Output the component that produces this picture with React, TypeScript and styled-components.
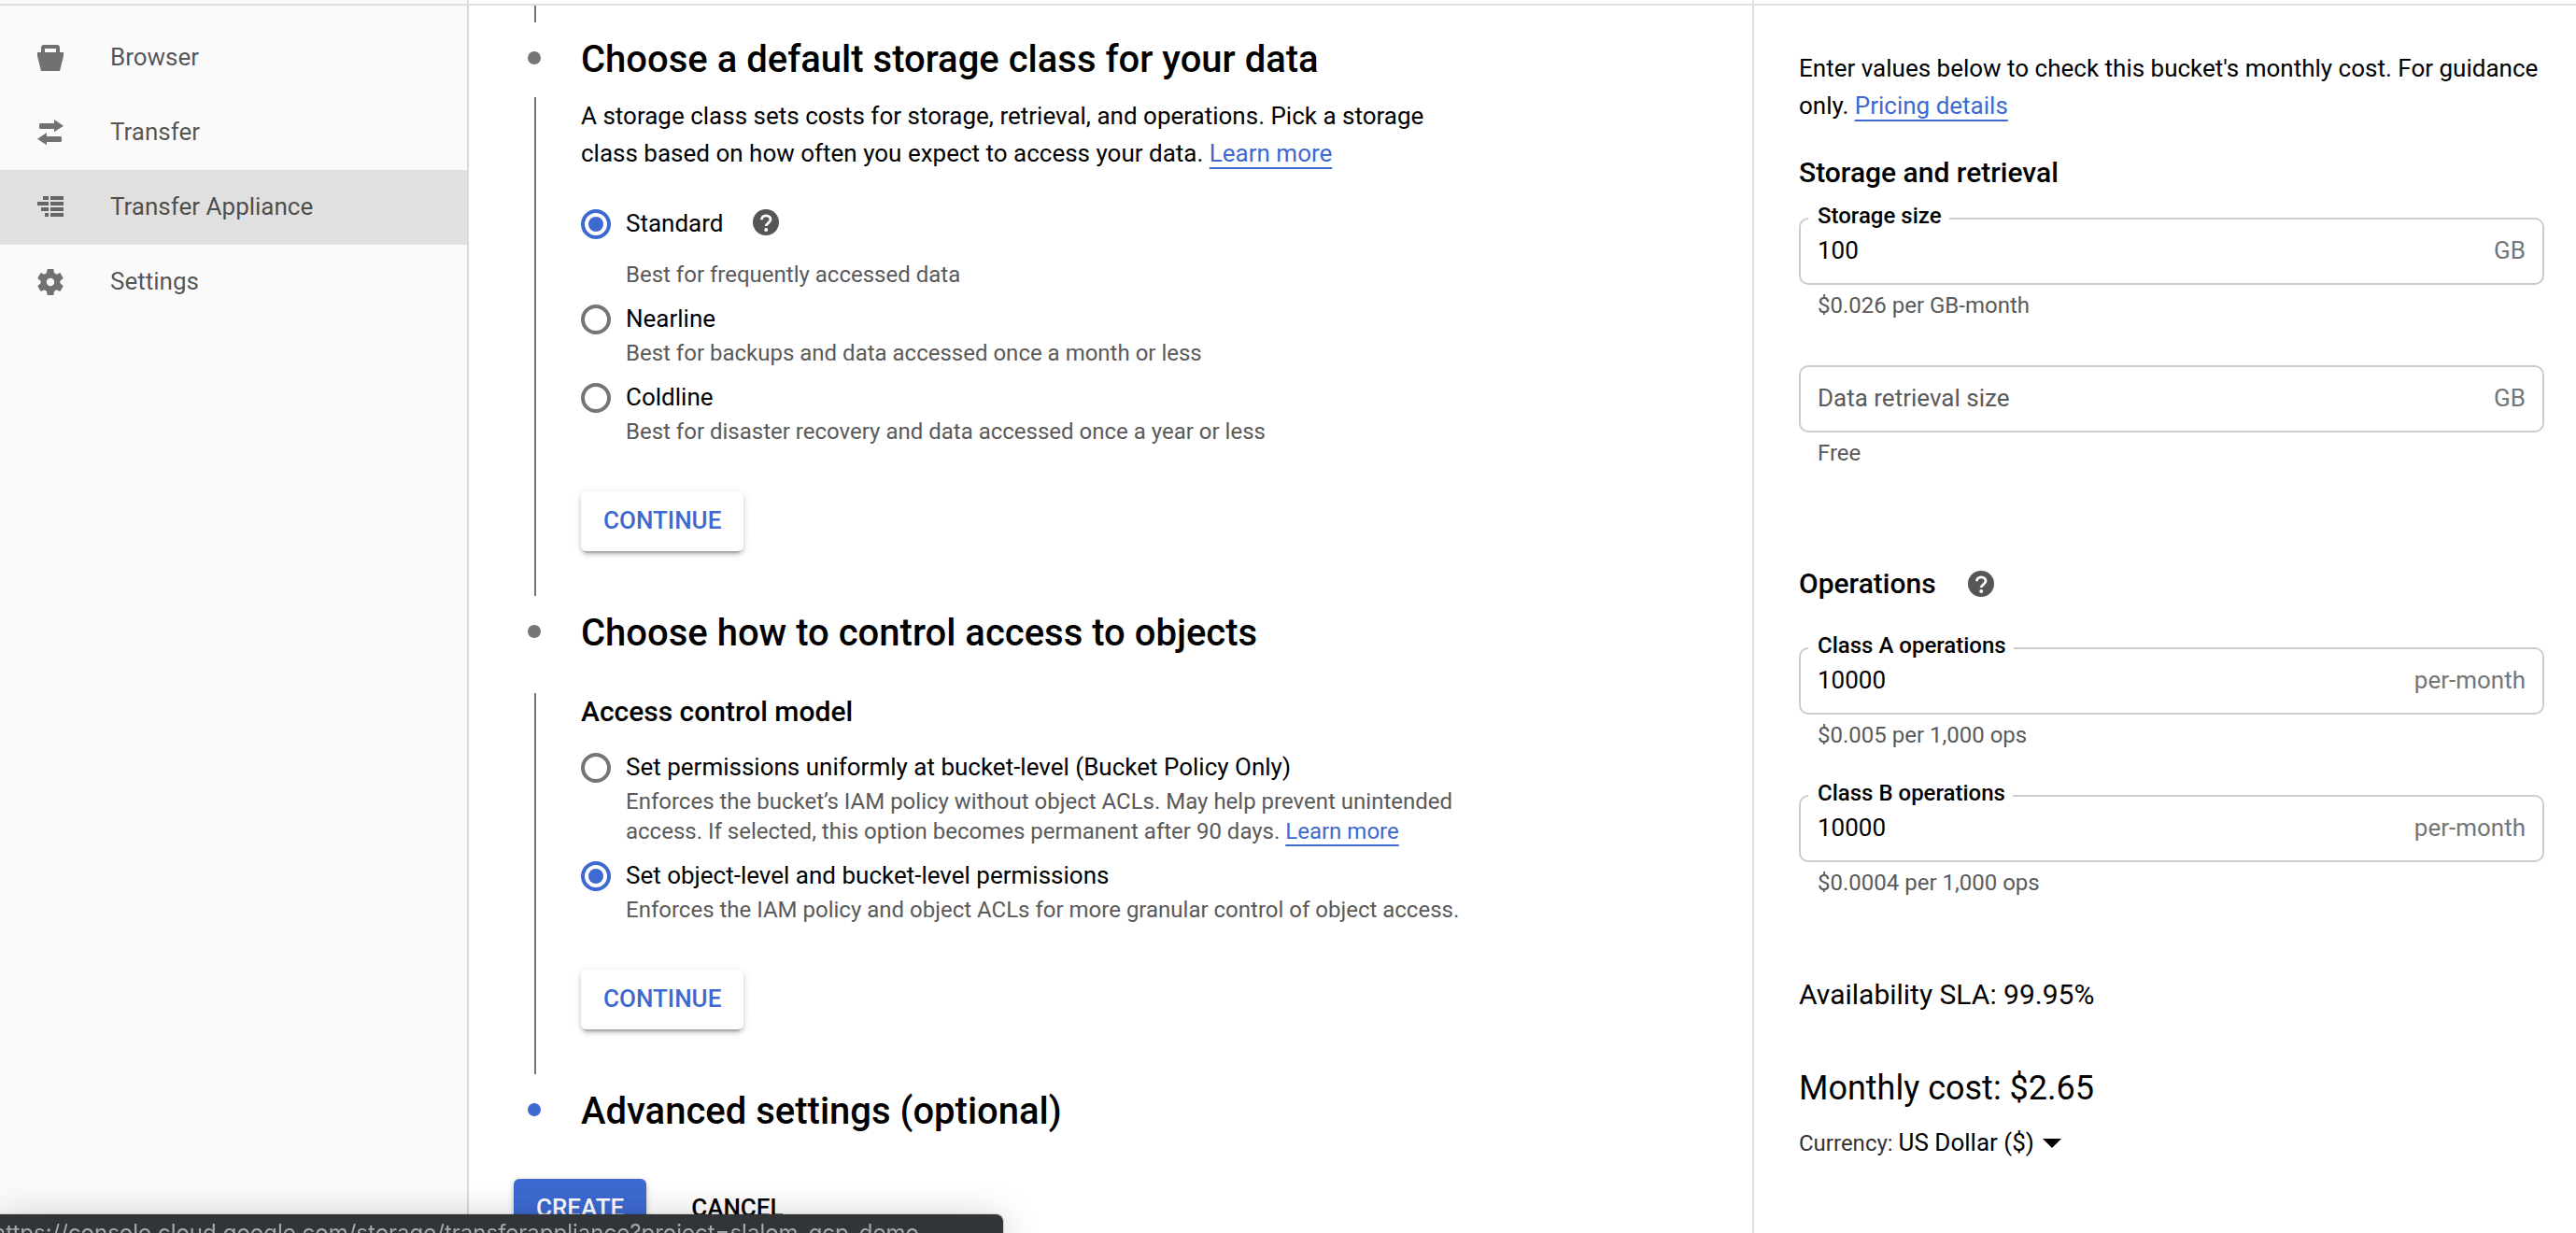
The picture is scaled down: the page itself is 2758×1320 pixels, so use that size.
import React, { ReactNode, useId, useState } from "react";
import styled, { createGlobalStyle, css } from "styled-components";

const color = {
  line: "#e0e0e0",
  outline: "#cccccc",
  link: "#3d69d0",
  muted: "#5a5a5a",
  suffix: "#757575",
  control: "#757575",
  sidebar: "#fafafa",
};

const GlobalStyle = createGlobalStyle`
  *, *::before, *::after { box-sizing: border-box; }
  body { margin: 0; background: #fff; color: #000; }
  body, button, input, select {
    font-family: Roboto, "Liberation Sans", sans-serif;
    font-size: 26px;
  }
  h2, h3, p { margin: 0; }
`;

const Shell = styled.div`
  display: grid;
  grid-template-columns: 502px minmax(0, 1fr) 882px;
  height: 100vh;
  overflow: hidden;
  line-height: 40px;
`;

const TopEdge = styled.div`
  flex: none;
  height: 6px;
  border-bottom: 2px solid ${color.line};
`;

/* Sidebar */

const Sidebar = styled.aside`
  display: flex;
  flex-direction: column;
  background: ${color.sidebar};
  border-right: 2px solid #dadada;
`;

const NavList = styled.nav`
  display: flex;
  flex-direction: column;
  padding-top: 16px;
`;

const NavLink = styled.a<{ $active?: boolean }>`
  display: flex;
  align-items: center;
  gap: 50px;
  height: 80px;
  padding-left: 40px;
  color: rgba(0, 0, 0, 0.68);
  text-decoration: none;
  background: ${(p) => (p.$active ? "#e0e0e0" : "transparent")};

  svg {
    flex: none;
    fill: rgba(0, 0, 0, 0.55);
  }
`;

const NavText = styled.span`
  padding-bottom: 2px;
`;

const CollapseButton = styled.button`
  display: flex;
  align-items: center;
  height: 60px;
  margin-top: auto;
  padding: 0 43px;
  border: 0;
  background: none;
`;

/* Steps */

const Main = styled.main`
  display: flex;
  flex-direction: column;
  min-width: 0;
`;

const Steps = styled.div`
  padding-left: 63px;
`;

const StepRow = styled.div<{ $roomy?: boolean }>`
  display: grid;
  grid-template-columns: 16px minmax(0, 1fr);
  column-gap: 41px;
  padding-bottom: ${(p) => (p.$roomy ? 24 : 0)}px;
`;

const Dot = styled.span<{ $current?: boolean }>`
  width: 14px;
  height: 14px;
  margin-top: 31px;
  border-radius: 50%;
  background: ${(p) => (p.$current ? color.link : color.control)};
`;

const Rail = styled.span`
  width: 2px;
  min-height: 18px;
  justify-self: center;
  background: ${color.control};
`;

const StepTitle = styled.h2`
  font-size: 40px;
  font-weight: 500;
  line-height: 80px;
`;

const StepBody = styled.div`
  max-width: 944px;
  padding-bottom: 48px;
`;

const SubTitle = styled.h3`
  font-size: 30px;
  font-weight: 500;
  line-height: 40px;
`;

const Link = styled.a`
  color: ${color.link};
  text-decoration: underline;
  text-decoration-thickness: 2px;
  text-underline-offset: 6px;
  text-decoration-skip-ink: none;
`;

const Options = styled.div<{ $gap: number }>`
  display: flex;
  flex-direction: column;
  gap: 16px;
  margin: ${(p) => p.$gap}px 0 48px;
`;

const OptionGrid = styled.div<{ $spaced?: boolean }>`
  display: grid;
  grid-template-columns: 32px minmax(0, 1fr);
  column-gap: 16px;
  row-gap: ${(p) => (p.$spaced ? 22 : 4)}px;
  line-height: 32px;
`;

const Radio = styled.input`
  appearance: none;
  width: 32px;
  height: 32px;
  margin: 0;
  padding: 4px;
  border: 4px solid ${color.control};
  border-radius: 50%;
  background-clip: content-box;

  &:checked {
    border-color: ${color.link};
    background-color: ${color.link};
  }
`;

const OptionLabel = styled.div`
  display: flex;
  gap: 32px;
  line-height: 30px;
`;

const OptionHint = styled.p`
  grid-column: 2;
  color: ${color.muted};
  font-size: 24px;
`;

const HelpButton = styled.button`
  display: flex;
  width: 28px;
  height: 28px;
  padding: 0;
  border: 0;
  background: none;
`;

const raised = css`
  box-shadow: 0 6px 2px -4px rgba(0, 0, 0, 0.2), 0 4px 4px rgba(0, 0, 0, 0.14),
    0 2px 10px rgba(0, 0, 0, 0.12);
`;

const Button = styled.button<{ $kind: "raised" | "primary" | "flat" }>`
  height: 64px;
  padding: 0 24px 2px;
  border: 0;
  border-radius: 6px;
  font-weight: 500;
  background: #fff;
  color: ${color.link};
  ${(p) => p.$kind !== "flat" && raised}
  ${(p) => p.$kind === "primary" && css`background: ${color.link}; color: #fff;`}
  ${(p) => p.$kind === "flat" && css`background: none; color: #000;`}
`;

const Actions = styled.div`
  display: flex;
  gap: 24px;
  padding: 32px 48px;
`;

/* Cost panel */

const CostPanel = styled.aside`
  display: flex;
  flex-direction: column;
  min-width: 0;
  border-left: 2px solid ${color.line};
`;

const CostBody = styled.div`
  padding: 47px 34px 0 48px;
`;

const CostTitle = styled.div<{ $top: number }>`
  display: flex;
  align-items: center;
  gap: 34px;
  margin-top: ${(p) => p.$top}px;
`;

const Fields = styled.div<{ $top: number }>`
  display: flex;
  flex-direction: column;
  gap: 48px;
  margin-top: ${(p) => p.$top}px;
`;

const Outline = styled.div`
  position: relative;
  display: flex;
  align-items: center;
  height: 72px;
  padding: 0 18px 2px;
  border: 2px solid ${color.outline};
  border-radius: 10px;
`;

const FloatingLabel = styled.label`
  position: absolute;
  top: -16px;
  left: 8px;
  padding: 0 8px 0 10px;
  background: #fff;
  font-size: 24px;
  font-weight: 500;
  line-height: 24px;
`;

const TextInput = styled.input`
  flex: 1;
  min-width: 0;
  height: 40px;
  padding: 0;
  border: 0;
  outline: 0;
  background: none;
  color: #000;

  &::placeholder {
    color: ${color.muted};
    opacity: 1;
  }
`;

const Suffix = styled.span`
  color: ${color.suffix};
`;

const FieldHint = styled.p`
  margin-top: 6px;
  padding-left: 20px;
  color: ${color.muted};
  font-size: 24px;
  line-height: 32px;
`;

const Sla = styled.p`
  margin-top: 84px;
  font-size: 30px;
`;

const MonthlyCost = styled.p`
  margin-top: 56px;
  font-size: 36px;
  line-height: 48px;
`;

const Currency = styled.div`
  display: flex;
  align-items: baseline;
  margin-top: 14px;

  label {
    margin-right: 6px;
    color: #333;
    font-size: 24px;
  }
  svg {
    align-self: center;
    margin-left: -20px;
    pointer-events: none;
  }
`;

const CurrencySelect = styled.select`
  appearance: none;
  height: 40px;
  padding: 0 28px 0 0;
  border: 0;
  background: none;
  color: #000;
`;

/* Browser link preview that lies over the bottom of the page */

const LinkPreview = styled.div`
  position: fixed;
  left: 0;
  bottom: -24px;
  width: min(1074px, 100%);
  height: 44px;
  overflow: hidden;
  border-radius: 0 8px 0 0;
  background: #323538;
  box-shadow: 0 0 2px rgba(0, 0, 0, 0.4), 0 4px 40px rgba(0, 0, 0, 0.2);
  color: #a6a8aa;
  font-family: Inter, Roboto, sans-serif;
  font-size: 24px;
  line-height: 40px;
  text-indent: -8px;
  white-space: nowrap;
`;

const HelpIcon = () => (
  <svg width="28" height="28" viewBox="0 0 28 28" aria-hidden="true">
    <circle cx="14" cy="14" r="14" fill="#565656" />
    <path
      d="M9.4 11.2C9.4 8.6 11.4 6.8 14.2 6.8s4.8 1.8 4.8 4.3c0 3.3-4.7 3.7-4.7 7"
      fill="none"
      stroke="#fff"
      strokeWidth="2.8"
    />
    <circle cx="14.2" cy="22" r="2" fill="#fff" />
  </svg>
);

const BucketIcon = () => (
  <svg width="28" height="28" viewBox="0 0 28 28" aria-hidden="true">
    <path d="M4 8V3a3 3 0 0 1 3-3h14a3 3 0 0 1 3 3v5h4v4l-4 16H4L0 12V8zM8 4v4h12V4z" fillRule="evenodd" />
  </svg>
);

const TransferIcon = () => (
  <svg width="28" height="28" viewBox="0 0 28 28" aria-hidden="true">
    <path d="M18 0l10 6.7-10 6.6V10H3.5A1.5 1.5 0 0 1 2 8.5v-3A1.5 1.5 0 0 1 3.5 4H18z" />
    <path d="M10 14L0 20.7l10 6.6V24h14.5a1.5 1.5 0 0 0 1.5-1.5v-3a1.5 1.5 0 0 0-1.5-1.5H10z" />
  </svg>
);

const ApplianceIcon = () => (
  <svg width="28" height="28" viewBox="0 0 28 28" aria-hidden="true">
    <path d="M6 2h6v4H6zM14 2h14v4H14zM0 8h12v4H0zM14 8h14v4H14zM4 14h8v4H4zM14 14h14v4H14zM8 20h4v4H8zM14 20h14v4H14z" />
  </svg>
);

const GearIcon = () => (
  <svg width="28" height="28" viewBox="2 2 20 20" aria-hidden="true">
    <path d="M19.43 12.98c.04-.32.07-.64.07-.98s-.03-.66-.07-.98l2.11-1.65c.19-.15.24-.42.12-.64l-2-3.46c-.12-.22-.39-.3-.61-.22l-2.49 1c-.52-.4-1.08-.73-1.69-.98l-.38-2.65C14.46 2.18 14.25 2 14 2h-4c-.25 0-.46.18-.49.42l-.38 2.65c-.61.25-1.17.59-1.69.98l-2.49-1c-.23-.09-.49 0-.61.22l-2 3.46c-.13.22-.07.49.12.64l2.11 1.65c-.04.32-.07.65-.07.98s.03.66.07.98l-2.11 1.65c-.19.15-.24.42-.12.64l2 3.46c.12.22.39.3.61.22l2.49-1c.52.4 1.08.73 1.69.98l.38 2.65c.03.24.24.42.49.42h4c.25 0 .46-.18.49-.42l.38-2.65c.61-.25 1.17-.59 1.69-.98l2.49 1c.23.09.49 0 .61-.22l2-3.46c.12-.22.07-.49-.12-.64l-2.11-1.65zM12 15a3 3 0 1 1 0-6 3 3 0 0 1 0 6z" />
  </svg>
);

const CollapseIcon = () => (
  <svg width="19" height="18" viewBox="0 0 19 18" aria-hidden="true">
    <path d="M10 1L2 9l8 8" fill="none" stroke="#000" strokeWidth="3" />
    <path d="M15.5 0H19v18h-3.5z" />
  </svg>
);

const CaretIcon = () => (
  <svg width="20" height="10" viewBox="0 0 20 10" aria-hidden="true">
    <path d="M0 0h20L10 10z" />
  </svg>
);

const navItems = [
  { label: "Browser", icon: <BucketIcon /> },
  { label: "Transfer", icon: <TransferIcon /> },
  { label: "Transfer Appliance", icon: <ApplianceIcon />, active: true },
  { label: "Settings", icon: <GearIcon /> },
];

interface OptionProps {
  group: string;
  label: string;
  hint: ReactNode;
  checked: boolean;
  onSelect: () => void;
  help?: boolean;
}

function Option({ group, label, hint, checked, onSelect, help }: OptionProps) {
  const id = useId();
  return (
    <OptionGrid $spaced={help}>
      <Radio type="radio" id={id} name={group} checked={checked} onChange={onSelect} />
      <OptionLabel>
        <label htmlFor={id}>{label}</label>
        {help && (
          <HelpButton type="button" aria-label={`About ${label}`}>
            <HelpIcon />
          </HelpButton>
        )}
      </OptionLabel>
      <OptionHint>{hint}</OptionHint>
    </OptionGrid>
  );
}

interface FieldProps {
  label: string;
  value?: string;
  suffix: string;
  hint: string;
}

function Field({ label, value, suffix, hint }: FieldProps) {
  const id = useId();
  return (
    <div>
      <Outline>
        {value && <FloatingLabel htmlFor={id}>{label}</FloatingLabel>}
        <TextInput
          id={id}
          type="text"
          defaultValue={value}
          placeholder={value ? undefined : label}
          aria-label={value ? undefined : label}
        />
        <Suffix>{suffix}</Suffix>
      </Outline>
      <FieldHint>{hint}</FieldHint>
    </div>
  );
}

export default function App() {
  const [storageClass, setStorageClass] = useState("standard");
  const [access, setAccess] = useState("object");

  return (
    <>
      <GlobalStyle />
      <Shell>
        <Sidebar>
          <TopEdge />
          <NavList>
            {navItems.map((item) => (
              <NavLink key={item.label} href="#" $active={item.active}>
                {item.icon}
                <NavText>{item.label}</NavText>
              </NavLink>
            ))}
          </NavList>
          <CollapseButton type="button" aria-label="Collapse menu">
            <CollapseIcon />
          </CollapseButton>
        </Sidebar>

        <Main>
          <TopEdge />
          <Steps>
            <StepRow>
              <Rail />
            </StepRow>
            <StepRow>
              <Dot />
              <StepTitle>Choose a default storage class for your data</StepTitle>
            </StepRow>
            <StepRow>
              <Rail />
              <StepBody>
                <p>
                  A storage class sets costs for storage, retrieval, and operations. Pick a storage
                  class based on how often you expect to access your data.{" "}
                  <Link href="#">Learn more</Link>
                </p>
                <Options $gap={40}>
                  <Option
                    group="class"
                    label="Standard"
                    hint="Best for frequently accessed data"
                    checked={storageClass === "standard"}
                    onSelect={() => setStorageClass("standard")}
                    help
                  />
                  <Option
                    group="class"
                    label="Nearline"
                    hint="Best for backups and data accessed once a month or less"
                    checked={storageClass === "nearline"}
                    onSelect={() => setStorageClass("nearline")}
                  />
                  <Option
                    group="class"
                    label="Coldline"
                    hint="Best for disaster recovery and data accessed once a year or less"
                    checked={storageClass === "coldline"}
                    onSelect={() => setStorageClass("coldline")}
                  />
                </Options>
                <Button type="button" $kind="raised">CONTINUE</Button>
              </StepBody>
            </StepRow>

            <StepRow $roomy>
              <Dot />
              <StepTitle>Choose how to control access to objects</StepTitle>
            </StepRow>
            <StepRow>
              <Rail />
              <StepBody>
                <SubTitle>Access control model</SubTitle>
                <Options $gap={24}>
                  <Option
                    group="access"
                    label="Set permissions uniformly at bucket-level (Bucket Policy Only)"
                    hint={
                      <>
                        Enforces the bucket’s IAM policy without object ACLs. May help prevent
                        unintended access. If selected, this option becomes permanent after 90
                        days. <Link href="#">Learn more</Link>
                      </>
                    }
                    checked={access === "bucket"}
                    onSelect={() => setAccess("bucket")}
                  />
                  <Option
                    group="access"
                    label="Set object-level and bucket-level permissions"
                    hint="Enforces the IAM policy and object ACLs for more granular control of object access."
                    checked={access === "object"}
                    onSelect={() => setAccess("object")}
                  />
                </Options>
                <Button type="button" $kind="raised">CONTINUE</Button>
              </StepBody>
            </StepRow>

            <StepRow>
              <Dot $current />
              <StepTitle>Advanced settings (optional)</StepTitle>
            </StepRow>
          </Steps>
          <Actions>
            <Button type="button" $kind="primary">CREATE</Button>
            <Button type="button" $kind="flat">CANCEL</Button>
          </Actions>
        </Main>

        <CostPanel>
          <TopEdge />
          <CostBody>
            <p>
              Enter values below to check this bucket's monthly cost. For guidance only.{" "}
              <Link href="#">Pricing details</Link>
            </p>
            <CostTitle $top={32}>
              <SubTitle>Storage and retrieval</SubTitle>
            </CostTitle>
            <Fields $top={28}>
              <Field label="Storage size" value="100" suffix="GB" hint="$0.026 per GB-month" />
              <Field label="Data retrieval size" suffix="GB" hint="Free" />
            </Fields>
            <CostTitle $top={104}>
              <SubTitle>Operations</SubTitle>
              <HelpButton type="button" aria-label="About operations">
                <HelpIcon />
              </HelpButton>
            </CostTitle>
            <Fields $top={48}>
              <Field label="Class A operations" value="10000" suffix="per-month" hint="$0.005 per 1,000 ops" />
              <Field label="Class B operations" value="10000" suffix="per-month" hint="$0.0004 per 1,000 ops" />
            </Fields>
            <Sla>Availability SLA: 99.95%</Sla>
            <MonthlyCost>Monthly cost: $2.65</MonthlyCost>
            <Currency>
              <label htmlFor="currency">Currency:</label>
              <CurrencySelect id="currency" defaultValue="usd">
                <option value="usd">US Dollar ($)</option>
              </CurrencySelect>
              <CaretIcon />
            </Currency>
          </CostBody>
        </CostPanel>
      </Shell>
      <LinkPreview>
        https://console.cloud.google.com/storage/transferappliance?project=slalom-gcp-demo
      </LinkPreview>
    </>
  );
}
